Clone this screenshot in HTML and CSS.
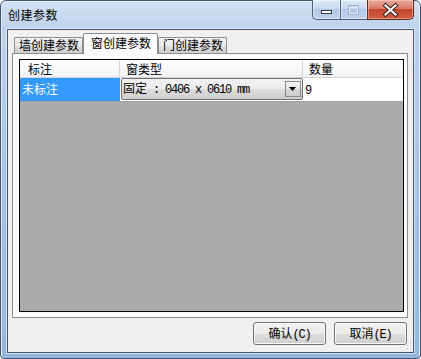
FILE: index.html
```html
<!DOCTYPE html>
<html lang="zh-CN">
<head>
    <meta charset="UTF-8">
    <title>创建参数</title>
    <link rel="stylesheet" href="styles.css">
</head>
<body>
    <div class="window">
        <div class="titlebar">
            <span class="title">创建参数</span>
            <div class="caption">
                <span class="cap-btn cap-min">
                    <svg width="28" height="20" viewBox="0 0 28 20"><rect x="9.5" y="10.5" width="10" height="3" fill="#fff" stroke="#2e3a4a"/></svg>
                </span>
                <span class="cap-btn cap-max">
                    <svg width="27" height="20" viewBox="0 0 27 20"><rect x="8.5" y="5.5" width="10" height="9" fill="none" stroke="#9fb0c6"/><rect x="9.5" y="7.5" width="8" height="6" fill="none" stroke="#e3ebf5"/></svg>
                </span>
                <span class="cap-btn cap-close">
                    <svg width="47" height="20" viewBox="0 0 47 20"><path d="M18.5 5.5 L28.5 14.5 M28.5 5.5 L18.5 14.5" stroke="#43201c" stroke-width="4.2" stroke-linecap="square"/><path d="M18.5 5.5 L28.5 14.5 M28.5 5.5 L18.5 14.5" stroke="#fff" stroke-width="2.2" stroke-linecap="square"/></svg>
                </span>
            </div>
        </div>
        <div class="client">
            <div class="tabs">
                <div class="tab">墙创建参数</div>
                <div class="tab active">窗创建参数</div>
                <div class="tab">门创建参数</div>
            </div>
            <div class="panel">
                <div class="grid">
                    <div class="grid-row head">
                        <div class="cell">标注</div>
                        <div class="cell">窗类型</div>
                        <div class="cell">数量</div>
                    </div>
                    <div class="grid-row">
                        <div class="cell selected">未标注</div>
                        <div class="cell combo-cell">
                            <div class="combo">
                                <span class="combo-text"><span class="cjk">固定</span><span class="ascii"> : 0406 x 0610 mm</span></span>
                                <span class="combo-btn">
                                    <svg width="8" height="5" viewBox="0 0 8 5"><path d="M0 0 H7 L3.5 4 Z" fill="#000"/></svg>
                                </span>
                            </div>
                        </div>
                        <div class="cell value"><span class="ascii">9</span></div>
                    </div>
                    <div class="grid-empty"></div>
                </div>
            </div>
            <div class="footer">
                <button class="btn"><span class="cjk">确认</span><span class="ascii">(C)</span></button>
                <button class="btn"><span class="cjk">取消</span><span class="ascii">(E)</span></button>
            </div>
            <svg class="grip" width="8" height="12" viewBox="0 0 8 12">
                <rect x="5" y="2" width="1" height="1" fill="#b5b5b5"/>
                <rect x="5" y="5" width="1" height="1" fill="#b5b5b5"/>
                <rect x="2" y="5" width="1" height="1" fill="#b5b5b5"/>
                <rect x="5" y="8" width="1" height="1" fill="#b5b5b5"/>
                <rect x="2" y="8" width="1" height="1" fill="#b5b5b5"/>
            </svg>
        </div>
    </div>
</body>
</html>
```

FILE: styles.css
```css
* {
    margin: 0;
    padding: 0;
    box-sizing: border-box;
}

body {
    width: 421px;
    height: 359px;
    overflow: hidden;
    background: #ffffff;
    font-family: "Noto Sans CJK SC", "Liberation Sans", sans-serif;
    font-size: 12px;
    color: #000;
}

.window {
    width: 421px;
    height: 359px;
    display: flex;
    flex-direction: column;
    border: 1px solid #3f5673;
    border-radius: 6px 6px 4px 4px;
    background: linear-gradient(180deg, #d3e2f4 0%, #bcd2ec 8%, #a9c4e6 45%, #96b6df 100%);
    box-shadow: inset 1px 0 0 #e6eef8, inset -1px 0 0 #e6eef8, inset 0 1px 0 #eef4fb;
}

.titlebar {
    height: 28px;
    display: flex;
    justify-content: space-between;
    align-items: flex-start;
    padding-left: 7px;
}

.title {
    line-height: 28px;
    font-size: 12px;
    letter-spacing: 0.5px;
    color: #000;
}

.caption {
    display: flex;
    margin-top: -1px;
    margin-right: 6px;
}

.cap-btn {
    display: block;
    height: 20px;
    border: 1px solid #4c5e78;
    border-top: none;
}

.cap-btn svg {
    display: block;
    margin: 0 -1px;
}

.cap-min {
    width: 28px;
    border-right: none;
    border-radius: 0 0 0 5px;
    background: linear-gradient(180deg, #dfe9f5 0%, #c9d9ee 45%, #b1c8e5 50%, #bdd2ec 100%);
    box-shadow: inset 0 0 0 1px rgba(255, 255, 255, 0.5);
}

.cap-max {
    width: 27px;
    border-right: none;
    background: linear-gradient(180deg, #dfe9f5 0%, #c9d9ee 45%, #b1c8e5 50%, #bdd2ec 100%);
    box-shadow: inset 0 0 0 1px rgba(255, 255, 255, 0.5);
}

.cap-close {
    width: 47px;
    border-color: #5a2a24;
    border-radius: 0 0 5px 0;
    background: linear-gradient(180deg, #e9a99b 0%, #d87c68 45%, #c4462c 50%, #d0603f 100%);
    box-shadow: inset 0 0 0 1px rgba(255, 220, 210, 0.45);
}

.client {
    flex: 1;
    position: relative;
    display: flex;
    flex-direction: column;
    margin: 0 6px 5px 6px;
    padding: 0 5px 0 4px;
    border: 1px solid #44566e;
    background: #f0f0f0;
    box-shadow: 0 0 0 1px rgba(255, 255, 255, 0.55);
}

/* 选项卡 */
.tabs {
    height: 23px;
    display: flex;
    align-items: flex-end;
    padding-left: 2px;
    position: relative;
    z-index: 1;
}

.tab {
    height: 16px;
    padding: 0 3px 0 4px;
    line-height: 14px;
    border: 1px solid #898c95;
    border-bottom: none;
    border-radius: 2px 2px 0 0;
    background: linear-gradient(180deg, #f3f3f3 0%, #ebebeb 50%, #dddddd 51%, #cfcfcf 100%);
    white-space: nowrap;
}

.tab.active {
    height: 21px;
    margin-bottom: -1px;
    padding: 0 6px 0 7px;
    line-height: 17px;
    background: #fcfcfc;
}

.panel {
    height: 265px;
    display: flex;
    padding: 5px 3px 5px 6px;
    border: 1px solid #898c95;
    background: #fcfcfc;
}

/* 表格 */
.grid {
    flex: 1;
    display: flex;
    flex-direction: column;
    border: 1px solid #000;
    background: #ababab;
}

.grid-row {
    display: grid;
    grid-template-columns: 100px 183px 1fr;
    height: 24px;
    background: #ffffff;
    border-bottom: 1px solid #a0a0a0;
}

.grid-row.head {
    height: 18px;
    background: linear-gradient(180deg, #ffffff 0%, #f7f8fa 60%, #f1f2f4 100%);
    border-bottom: 1px solid #d5d5d5;
}

.cell {
    border-right: 1px solid #d5d5d5;
    padding-left: 6px;
    line-height: 17px;
    white-space: nowrap;
    overflow: hidden;
}

.head .cell:first-child {
    padding-left: 8px;
}

.cell:last-child {
    border-right: none;
}

.grid-row .cell.selected {
    background: #3399ff;
    color: #ffffff;
    padding-left: 2px;
    line-height: 22px;
    border-right: none;
}

.combo-cell {
    padding: 0 0 0 1px;
    border-right: none;
}

.combo {
    height: 22px;
    display: flex;
    align-items: center;
    justify-content: space-between;
    padding: 0 1px 0 1px;
    border: 1px solid #707070;
    border-radius: 2px;
    background: linear-gradient(180deg, #f2f2f2 0%, #ebebeb 50%, #dddddd 51%, #cfcfcf 100%);
}

.combo-text {
    white-space: nowrap;
    line-height: 20px;
}

.combo-btn {
    width: 16px;
    height: 16px;
    display: flex;
    align-items: center;
    justify-content: center;
    border: 1px solid #8a8a8a;
    background: linear-gradient(180deg, #f4f4f4 0%, #e6e6e6 50%, #d6d6d6 51%, #d0d0d0 100%);
}

.combo-btn svg {
    display: block;
}

.cell.value {
    padding-left: 2px;
    line-height: 22px;
}

.grid-empty {
    flex: 1;
    background: #ababab;
}

.cjk {
    font-family: "Noto Sans CJK SC", sans-serif;
    font-size: 12px;
}

.ascii {
    font-family: "Liberation Mono", "DejaVu Sans Mono", monospace;
    font-size: 12px;
    letter-spacing: -1.2px;
    white-space: pre;
}

/* 按钮 */
.footer {
    display: flex;
    justify-content: flex-end;
    gap: 8px;
    padding: 4px 1px 7px 0;
}

.btn {
    width: 73px;
    height: 23px;
    border: 1px solid #707070;
    border-radius: 3px;
    background: linear-gradient(180deg, #f2f2f2 0%, #ebebeb 50%, #dddddd 51%, #cfcfcf 100%);
    box-shadow: inset 0 0 0 1px #fbfbfb;
    color: #000;
    line-height: 20px;
    cursor: default;
}

.grip {
    position: absolute;
    right: 0;
    bottom: 0;
}
```
